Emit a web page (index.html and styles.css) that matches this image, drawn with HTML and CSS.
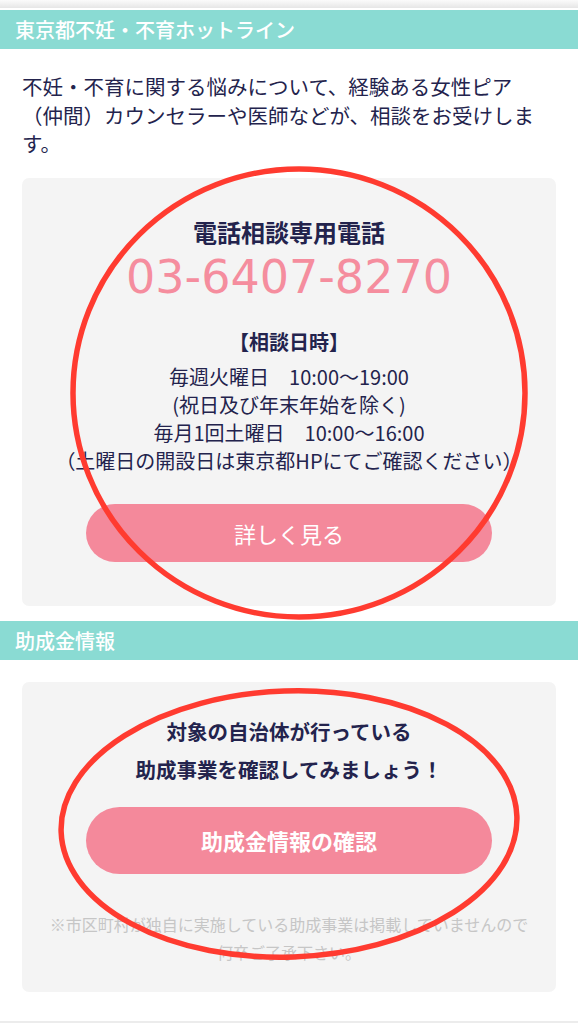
FILE: index.html
```html
<!DOCTYPE html>
<html lang="ja">
<head>
  <meta charset="UTF-8">
  <meta name="viewport" content="width=device-width, initial-scale=1.0">
  <title>不妊・不育ホットライン</title>
  <link rel="stylesheet" href="styles.css">
</head>
<body>
<div class="top-shadow"></div>

<section class="block">
  <h2 class="section-title">東京都不妊・不育ホットライン</h2>
  <p class="lead">不妊・不育に関する悩みについて、経験ある女性ピア（仲間）カウンセラーや医師などが、相談をお受けします。</p>
  <div class="card hotline">
    <h3 class="card-title">電話相談専用電話</h3>
    <p class="tel">03-6407-8270</p>
    <h4 class="hours-title">【相談日時】</h4>
    <p class="hours">毎週火曜日　10:00〜19:00<br>(祝日及び年末年始を除く)<br>毎月1回土曜日　10:00〜16:00<br>（土曜日の開設日は東京都HPにてご確認ください）</p>
    <a class="btn-pink btn-more" href="#">詳しく見る</a>
  </div>
</section>

<section class="block">
  <h2 class="section-title">助成金情報</h2>
  <div class="card subsidy">
    <p class="subsidy-text">対象の自治体が行っている<br>助成事業を確認してみましょう！</p>
    <a class="btn-pink btn-subsidy" href="#">助成金情報の確認</a>
    <p class="note">※市区町村が独自に実施している助成事業は掲載していませんので何卒ご了承下さい。</p>
  </div>
</section>

<footer class="page-footer"></footer>

<!-- hand drawn marks over the page -->
<svg class="marks" width="578" height="1024" viewBox="0 0 578 1024">
  <ellipse cx="299" cy="393" rx="226" ry="224" fill="none" stroke="#ff3b30" stroke-width="5.5"/>
  <ellipse cx="289" cy="824" rx="228" ry="133" fill="none" stroke="#ff3b30" stroke-width="5.5" transform="rotate(-2 289 824)"/>
</svg>
</body>
</html>
```

FILE: styles.css
```css
body {
  margin: 0;
  padding: 0;
  background: #fff;
  color: #23234d;
  font-family: "Noto Sans CJK JP", sans-serif;
  position: relative;
  min-height: 1024px;
}
.top-shadow {
  height: 8px;
  background: linear-gradient(#fbfbfb, #e6e6e6);
}
.section-title {
  margin: 2px 0 0;
  height: 39px;
  line-height: 39px;
  padding-left: 15px;
  background: #8adbd3;
  color: #fff;
  font-size: 20px;
  font-weight: 500;
}
.block + .block .section-title {
  margin-top: 15px;
}
.lead {
  margin: 23px 30px 0 22px;
  font-size: 20.5px;
  line-height: 28.5px;
}
.card {
  margin: 20px 22px 0;
  background: #f4f4f4;
  border-radius: 7px;
  text-align: center;
}
.hotline {
  padding: 37px 0 44px;
}
.card-title {
  margin: 0;
  font-size: 24px;
  line-height: 34px;
  font-weight: bold;
}
.tel {
  margin: 2px 0 0;
  color: #f58d9e;
  font-family: "DejaVu Sans", sans-serif;
  font-size: 46px;
  line-height: 52px;
}
.hours-title {
  margin: 25px 0 0;
  font-size: 20px;
  line-height: 28px;
  font-weight: bold;
}
.hours {
  margin: 7px 0 0;
  font-size: 20px;
  line-height: 28px;
  white-space: nowrap;
}
.btn-pink {
  display: block;
  margin: 0 64px;
  background: #f4899b;
  color: #fff;
  text-decoration: none;
  font-size: 22px;
}
.btn-more {
  margin-top: 29px;
  height: 58px;
  line-height: 58px;
  border-radius: 29px;
}
.subsidy {
  margin-top: 22px;
  padding: 30px 0 26px;
}
.subsidy-text {
  margin: 0;
  font-size: 20.5px;
  line-height: 38px;
  font-weight: bold;
}
.btn-subsidy {
  margin-top: 19px;
  height: 67px;
  line-height: 67px;
  border-radius: 34px;
  font-weight: bold;
}
.note {
  margin: 36px 26px 0;
  color: #c6c6c6;
  font-size: 16px;
  line-height: 28px;
}
.page-footer {
  margin-top: 29px;
  height: 2px;
  background: #ececec;
}
.marks {
  position: absolute;
  top: 0;
  left: 0;
  pointer-events: none;
}
```
